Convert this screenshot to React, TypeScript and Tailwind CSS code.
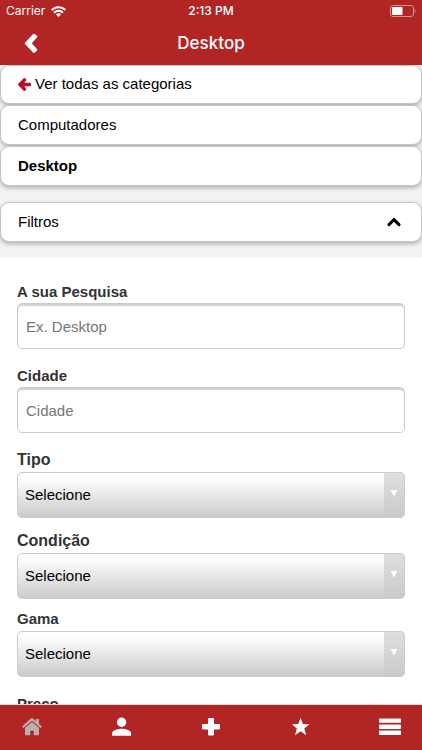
import type { ReactNode } from "react";

const categories = ["Computadores", "Desktop"];

const searchFields = [
  { id: "pesquisa", label: "A sua Pesquisa", placeholder: "Ex. Desktop", gap: "pt-[22px]" },
  { id: "cidade", label: "Cidade", placeholder: "Cidade", gap: "pt-[15px]" },
];

const selectFields = [
  { id: "tipo", label: "Tipo", size: "text-[16px]", gap: "pt-[15px]" },
  { id: "condicao", label: "Condição", size: "text-[16px]", gap: "pt-[11px]" },
  { id: "gama", label: "Gama", size: "text-[15px]", gap: "pt-2" },
  { id: "preco", label: "Preço", size: "text-[15px]", gap: "pt-[15px]" },
];

const cardClass =
  "flex w-full items-center rounded-[9px] border border-[#c6c6c6] bg-white px-[17px] text-left text-black shadow-[0_2px_4px_rgba(0,0,0,0.28)]";

function StatusBar() {
  return (
    <div className="grid h-[22px] grid-cols-3 items-center px-[6px] text-[12px]">
      <div className="flex items-center gap-[6px]">
        <span>Carrier</span>
        <svg viewBox="0 0 15 11" className="h-[11px] w-[15px]" fill="none" stroke="currentColor">
          <path d="M.8 4.1a9.4 9.4 0 0 1 13.4 0" strokeWidth="2.1" />
          <path d="M3.1 6.7a6.2 6.2 0 0 1 8.8 0" strokeWidth="2" />
          <path d="M7.5 10.9 5 8.5a3.6 3.6 0 0 1 5 0z" fill="currentColor" stroke="none" />
        </svg>
      </div>
      <span className="text-center font-medium">2:13 PM</span>
      <svg viewBox="0 0 26 12" className="h-3 w-[26px] justify-self-end">
        <rect x="0.5" y="0.5" width="23" height="11" rx="2.5" fill="none" stroke="#d98f8f" />
        <rect x="2" y="2" width="10.5" height="8" rx="0.8" fill="#fff" />
        <path d="M24.7 4c1.2.6 1.2 3.4 0 4z" fill="#d98f8f" />
      </svg>
    </div>
  );
}

function Header() {
  return (
    <header className="shrink-0 bg-[#b12524] font-['Inter',sans-serif] text-white">
      <StatusBar />
      <div className="grid h-[43px] grid-cols-[1fr_auto_1fr] items-center px-6">
        <button aria-label="Voltar" className="w-fit">
          <svg viewBox="0 0 14 20" className="h-5 w-[14px]" fill="currentColor">
            <path d="M9.1 0a1.2 1.2 0 0 1 1.7 0l2.1 1.7a1.2 1.2 0 0 1 0 1.7L7.8 9.3l5.1 5.7a1.2 1.2 0 0 1 0 1.7l-2.1 1.9a1.2 1.2 0 0 1-1.7 0L1.2 10.2a1.2 1.2 0 0 1 0-1.8z" />
          </svg>
        </button>
        <h1 className="text-[17px] font-medium">Desktop</h1>
      </div>
    </header>
  );
}

function TabButton({ label, children }: { label: string; children: ReactNode }) {
  return (
    <button aria-label={label}>
      <svg viewBox="0 0 22 20" className="h-5 w-[22px]" fill="currentColor">
        {children}
      </svg>
    </button>
  );
}

function TabBar() {
  return (
    <nav className="flex h-[46px] shrink-0 items-center justify-between border-t border-[#dcdcdc] bg-[#b12524] px-[21px] pb-px text-white">
      <TabButton label="Início">
        <g fill="#bcb0af">
          <path d="M11 1.2a1.6 1.6 0 0 1 1.1.4l3 2.7V2.1h2.8v4.7l3 2.7-1.2 1.4L11 3.8l-8.7 7.1-1.2-1.4 8.8-7.9a1.6 1.6 0 0 1 1.1-.4z" />
          <path d="M11 4.9 18 10.8v6.8a.7.7 0 0 1-.7.7h-4.6v-4.6H9.3v4.6H4.7a.7.7 0 0 1-.7-.7v-6.8z" />
        </g>
      </TabButton>
      <TabButton label="Conta">
        <circle cx="10.6" cy="5.2" r="4.7" />
        <path d="M1.1 18.8v-2.2c0-3.4 5.8-4.8 9.5-4.8s9.5 1.4 9.5 4.8v2.2z" />
      </TabButton>
      <TabButton label="Adicionar">
        <path d="M9 1h4a1 1 0 0 1 1 1v5h5a1 1 0 0 1 1 1v3.6a1 1 0 0 1-1 1h-5v5a1 1 0 0 1-1 1H9a1 1 0 0 1-1-1v-5H3a1 1 0 0 1-1-1V8a1 1 0 0 1 1-1h5V2a1 1 0 0 1 1-1z" />
      </TabButton>
      <TabButton label="Favoritos">
        <path d="m10.6.8 2.3 6.3 6.6.2-5.2 4.1 1.9 6.9-5.6-4-5.6 4 1.9-6.9-5.2-4.1 6.6-.2z" />
      </TabButton>
      <TabButton label="Menu">
        <rect x="0" y="1.4" width="22" height="4.4" rx="0.8" />
        <rect x="0" y="7.5" width="22" height="4.4" rx="0.8" />
        <rect x="0" y="13.6" width="22" height="4.4" rx="0.8" />
      </TabButton>
    </nav>
  );
}

function FilterForm() {
  return (
    <form className="border-t border-[#f8f8f8] bg-white px-[17px] pb-4">
      {searchFields.map((field) => (
        <div key={field.id} className={field.gap}>
          <label
            htmlFor={field.id}
            className="block h-[23px] text-[15px] leading-6 font-bold text-[#333]"
          >
            {field.label}
          </label>
          <input
            id={field.id}
            type="text"
            placeholder={field.placeholder}
            className="block h-[46px] w-full rounded-[5px] border border-[#ccc] bg-white px-2 text-[15px] text-black shadow-[inset_0_2px_1px_#d2d2d2] outline-none placeholder:text-[#777]"
          />
        </div>
      ))}
      {selectFields.map((field) => (
        <div key={field.id} className={field.gap}>
          <label
            htmlFor={field.id}
            className={`block h-6 leading-6 font-bold text-[#333] ${field.size}`}
          >
            {field.label}
          </label>
          <div className="relative">
            <select
              id={field.id}
              className="block h-[46px] w-full appearance-none rounded-[5px] border border-[#ccc] bg-linear-to-b from-white from-10% to-[#cbcbcb] pr-6 pl-[7px] text-[15px] text-black"
            >
              <option>Selecione</option>
            </select>
            <span className="pointer-events-none absolute inset-y-0 right-0 flex w-[21px] justify-center rounded-r-[5px] border border-l-0 border-[#ccc] bg-linear-to-b from-[#dedede] to-[#cacaca] pt-4">
              <svg viewBox="0 0 8 8" className="mr-px h-2 w-2" fill="#fff">
                <path d="M0.5 1h7L4 7.4z" />
              </svg>
            </span>
          </div>
        </div>
      ))}
    </form>
  );
}

export default function App() {
  return (
    <div className="flex h-dvh flex-col overflow-hidden bg-[#f3f3f3] font-['Liberation_Sans',Arial,sans-serif] text-[15px]">
      <Header />
      <main className="min-h-0 flex-1 overflow-y-auto [scrollbar-width:none]">
        <nav className="flex flex-col gap-px">
          <a href="#categorias" className={`${cardClass} h-[39px]`}>
            <svg viewBox="0 0 13 13" className="mr-1 h-[13px] w-[13px] fill-[#b8102a]">
              <path d="M5.7.3a1 1 0 0 1 1.4 0l.9.9a1 1 0 0 1 0 1.4L6.3 4.7H12a1 1 0 0 1 1 1v1.6a1 1 0 0 1-1 1H6.3L8 10.4a1 1 0 0 1 0 1.4l-.9.9a1 1 0 0 1-1.4 0L.3 7.2a1 1 0 0 1 0-1.4z" />
            </svg>
            Ver todas as categorias
          </a>
          {categories.map((name) => (
            <a
              key={name}
              href={`#${name.toLowerCase()}`}
              className={`${cardClass} h-10 ${name === "Desktop" ? "font-bold" : ""}`}
            >
              {name}
            </a>
          ))}
        </nav>
        <div className="pt-4 pb-[15px]">
          <button aria-expanded="true" className={`${cardClass} h-10 justify-between`}>
            Filtros
            <svg
              viewBox="0 0 14 10"
              className="mr-[3px] h-[10px] w-[14px]"
              fill="none"
              stroke="currentColor"
              strokeWidth="3"
              strokeLinecap="round"
            >
              <path d="M2 7.6 7 2.6l5 5" />
            </svg>
          </button>
        </div>
        <FilterForm />
      </main>
      <TabBar />
    </div>
  );
}
